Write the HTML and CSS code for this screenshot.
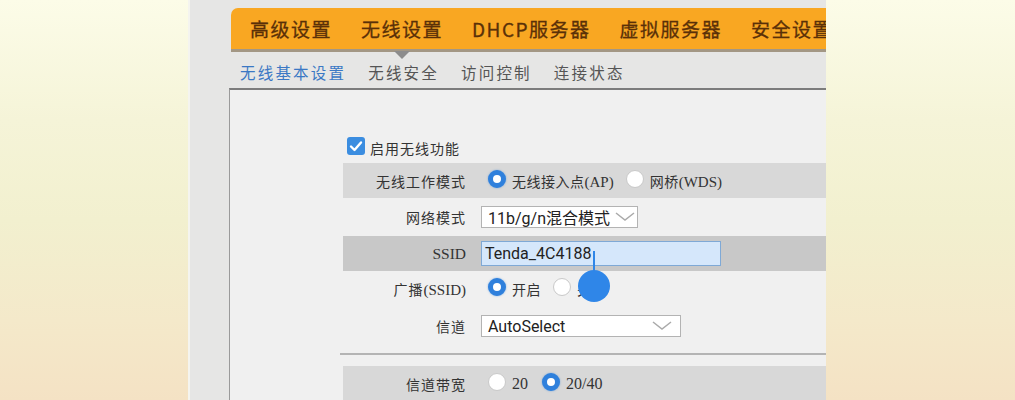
FILE: index.html
```html
<!DOCTYPE html>
<html lang="zh-CN">
<head>
<meta charset="utf-8">
<title>无线基本设置</title>
<link rel="stylesheet" href="styles.css">
</head>
<body>
<div class="stage">
  <div class="side"></div>
  <div class="panel">
    <nav class="mainnav">
      <span class="mi">高级设置</span>
      <span class="mi active">无线设置</span>
      <span class="mi">DHCP服务器</span>
      <span class="mi">虚拟服务器</span>
      <span class="mi">安全设置</span>
    </nav>
    <div class="subnav">
      <span class="si on">无线基本设置</span>
      <span class="si">无线安全</span>
      <span class="si">访问控制</span>
      <span class="si">连接状态</span>
    </div>
    <div class="content">
      <div class="form">
        <div class="enable">
          <span class="cbox"><svg viewBox="0 0 18 18" width="18" height="18"><path d="M4 9.5 L7.5 13 L14 5.5" fill="none" stroke="#fff" stroke-width="2.4" stroke-linecap="round" stroke-linejoin="round"/></svg></span>
          <span class="lbl-en">启用无线功能</span>
        </div>
        <div class="row band h35">
          <div class="lab">无线工作模式</div>
          <div class="ctl">
            <span class="radio on"></span><span class="rt">无线接入点<span class="serif">(AP)</span></span>
            <span class="radio"></span><span class="rt">网桥<span class="serif">(WDS)</span></span>
          </div>
        </div>
        <div class="row h38">
          <div class="lab">网络模式</div>
          <div class="ctl">
            <div class="sel s1"><span>11b/g/n混合模式</span><svg class="chev" viewBox="0 0 20 10" width="20" height="10"><path d="M1 1 L10 8 L19 1" fill="none" stroke="#aaa" stroke-width="1.5"/></svg></div>
          </div>
        </div>
        <div class="row band dark h35">
          <div class="lab serif">SSID</div>
          <div class="ctl">
            <div class="inp"><span>Tenda_4C4188</span>
              <span class="handle"><span class="stem"></span><span class="drop"></span></span>
            </div>
          </div>
        </div>
        <div class="row h36">
          <div class="lab">广播<span class="serif">(SSID)</span></div>
          <div class="ctl">
            <span class="radio on"></span><span class="rt">开启</span>
            <span class="radio"></span><span class="rt">关闭</span>
          </div>
        </div>
        <div class="row h38">
          <div class="lab">信道</div>
          <div class="ctl">
            <div class="sel s2"><span>AutoSelect</span><svg class="chev" viewBox="0 0 20 10" width="20" height="10"><path d="M1 1 L10 8 L19 1" fill="none" stroke="#aaa" stroke-width="1.5"/></svg></div>
          </div>
        </div>
        <div class="sep"></div>
        <div class="row band h36">
          <div class="lab">信道带宽</div>
          <div class="ctl">
            <span class="radio"></span><span class="rt serif">20</span>
            <span class="radio on"></span><span class="rt serif">20/40</span>
          </div>
        </div>
      </div>
    </div>
  </div>
  <div class="side"></div>
</div>
</body>
</html>
```
FILE: styles.css
```css
html, body {
  margin: 0;
  padding: 0;
  height: 400px;
  overflow: hidden;
}
body {
  background: linear-gradient(to bottom, #fcfce8 0%, #f5f4d8 30%, #f2f0cf 55%, #f4e9ca 80%, #f4e2c4 100%);
  font-family: "Noto Sans CJK SC", "Noto Sans", sans-serif;
  color: #333;
}
.stage {
  display: flex;
  height: 400px;
}
.side {
  flex: 1 1 0;
}
.stage .side:first-child {
  flex: 0 0 188px;
}
.panel {
  flex: 0 0 638px;
  background: #e6e6e5;
  border-left: 2px solid #f4f4ef;
  overflow: hidden;
  padding-top: 8px;
  box-sizing: border-box;
  height: 400px;
}
.mainnav {
  margin-left: 41px;
  height: 41px;
  background: #f9a722;
  border-radius: 7px 0 0 0;
  border-bottom: 3px solid #a39784;
  display: flex;
  align-items: center;
  gap: 29px;
  padding-left: 19px;
  white-space: nowrap;
  position: relative;
}
.mi {
  font-size: 19px;
  letter-spacing: 1.5px;
  color: #5a3008;
  font-weight: 400;
  -webkit-text-stroke: 0.3px #5a3008;
}
.mi.active {
  position: relative;
}
.mi.active::after {
  content: "";
  position: absolute;
  left: 50%;
  margin-left: -8px;
  top: 36px;
  border-left: 8px solid transparent;
  border-right: 8px solid transparent;
  border-top: 8px solid #8c8c8c;
}
.subnav {
  margin-left: 50px;
  height: 36px;
  padding-top: 3px;
  box-sizing: border-box;
  display: flex;
  align-items: center;
  gap: 22px;
  white-space: nowrap;
}
.si {
  font-size: 15.5px;
  letter-spacing: 2.2px;
  color: #555;
}
.si.on {
  color: #3b78c4;
}
.content {
  margin-left: 39px;
  background: #f0f0f0;
  border-top: 2px solid #7c7c7c;
  border-left: 1px solid #9a9a9a;
  height: 320px;
  padding-top: 45px;
  box-sizing: border-box;
}
.form {
  margin-left: 113px;
}
.enable {
  display: flex;
  align-items: center;
  height: 22px;
  margin-left: 4px;
  margin-bottom: 6px;
}
.cbox {
  width: 18px;
  height: 18px;
  background: #3b8de0;
  border-radius: 3px;
  display: inline-flex;
  margin-right: 5px;
}
.lbl-en {
  font-size: 14px;
  letter-spacing: 1px;
  color: #333;
  margin-top: 4px;
}
.row {
  display: flex;
  align-items: center;
}
.h35 { height: 35px; }
.h36 { height: 36px; }
.h38 { height: 38px; }
.band { background: #d8d8d8; }
.band.dark { background: #c8c8c8; }
.lab {
  width: 123px;
  text-align: right;
  font-size: 14px;
  letter-spacing: 1px;
  color: #333;
  flex: 0 0 123px;
}
.serif {
  font-family: "Liberation Serif", "Noto Sans CJK SC", serif;
  letter-spacing: 0;
  font-size: 15px;
}
.lab.serif {
  font-size: 15.5px;
}
.ctl {
  margin-left: 15px;
  display: flex;
  align-items: center;
  position: relative;
}
.radio {
  width: 16px;
  height: 16px;
  border-radius: 50%;
  background: #fff;
  border: 1px solid #c9c9c9;
  box-sizing: content-box;
  display: inline-block;
  margin-right: 6px;
  margin-top: -4px;
}
.ctl .radio:first-child {
  margin-left: 7px;
}
.radio.on {
  width: 8px;
  height: 8px;
  border: 5px solid #2f80dc;
  box-shadow: 0 0 2px rgba(47, 128, 220, .6);
}
.rt {
  font-size: 14px;
  letter-spacing: 0.5px;
  color: #333;
  margin-right: 12px;
}
.rt.serif { font-size: 16px; margin-right: 14px; letter-spacing: 0; }
.sel {
  height: 22px;
  background: #fff;
  border: 1px solid #b3b3b3;
  display: flex;
  align-items: center;
  justify-content: space-between;
  font-family: "Roboto", "Noto Sans CJK SC", sans-serif;
  font-size: 16px;
  color: #222;
  padding-left: 6px;
  padding-right: 2px;
  box-sizing: border-box;
}
.sel.s1 { width: 157px; }
.sel.s2 { width: 200px; padding-right: 8px; }
.chev { display: block; }
.inp {
  width: 240px;
  height: 25px;
  box-sizing: border-box;
  background: #d5e7fb;
  border: 1px solid #7fa9d6;
  display: flex;
  align-items: center;
  padding-left: 3px;
  font-family: "Roboto", sans-serif;
  font-size: 16px;
  color: #222;
  position: relative;
}
.handle {
  position: absolute;
  left: 96px;
  top: 9px;
  width: 32px;
  height: 52px;
  z-index: 10;
}
.stem {
  position: absolute;
  left: 15px;
  top: 0;
  width: 2px;
  height: 22px;
  background: #2f86e8;
}
.drop {
  position: absolute;
  left: 0;
  top: 19px;
  width: 32px;
  height: 32px;
  border-radius: 50%;
  background: #2f86e8;
}
.sep {
  height: 2px;
  background: #b4b4b4;
  margin-left: -3px;
  margin-top: 8px;
  margin-bottom: 11px;
}
```
